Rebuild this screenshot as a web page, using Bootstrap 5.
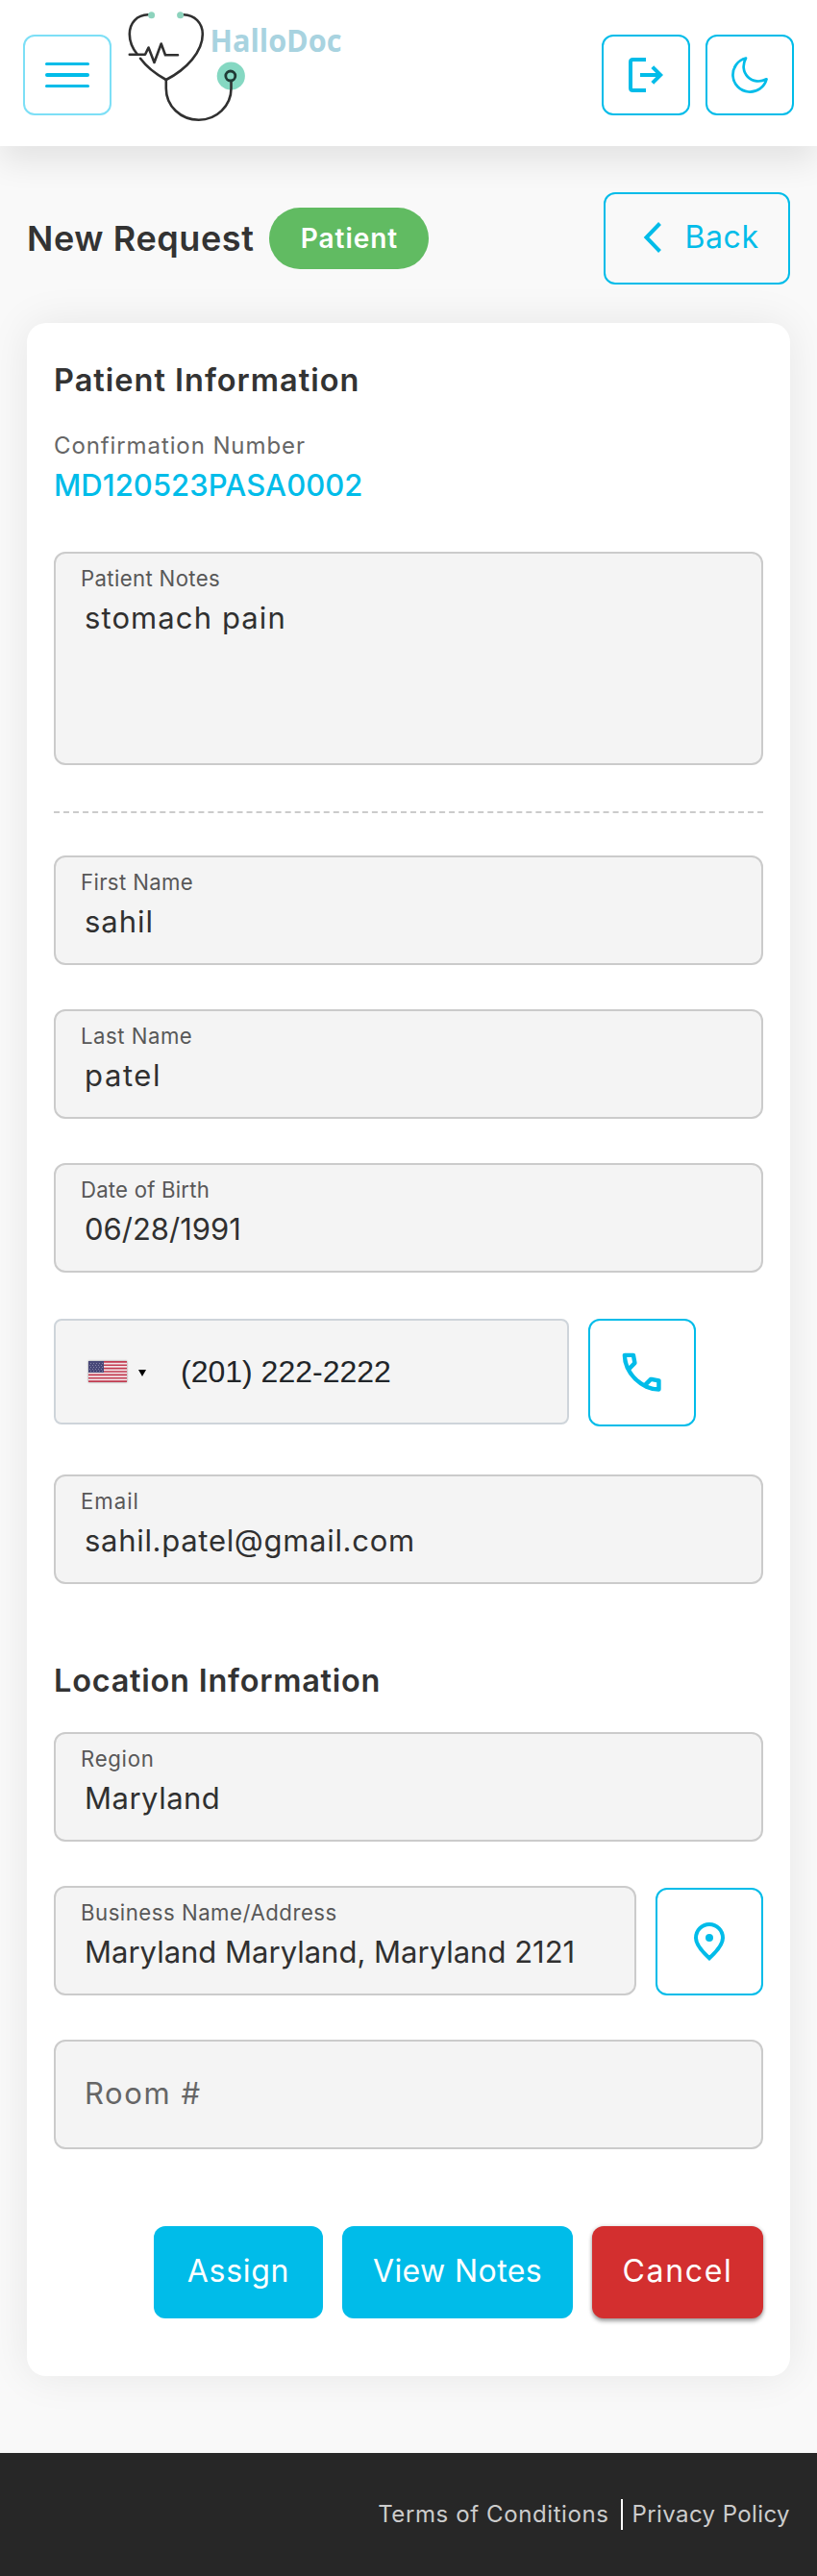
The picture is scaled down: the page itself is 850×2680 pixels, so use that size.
<!DOCTYPE html>
<html lang="en">
<head>
<meta charset="utf-8">
<meta name="viewport" content="width=device-width, initial-scale=1">
<title>HalloDoc - New Request</title>
<link href="https://cdn.jsdelivr.net/npm/bootstrap@5.3.0/dist/css/bootstrap.min.css" rel="stylesheet">
<style>
  :root { --brand: #00bce9; --ink: #333; --line: #cbcbcb; }
  body { background: #f9f9f9; color: var(--ink); font-family: Inter, "Open Sans", sans-serif; }
  .topbar { height: 152px; padding: 4px 24px 0; box-shadow: 0 16px 32px rgba(0,0,0,.09); }
  .topbar .btn { width: 92px; height: 84px; }
  .brand-logo { margin: 0 0 26px 14px; }
  .btn { border-radius: 12px; border-width: 2px; font-size: 32px; padding: 0; display: inline-flex; align-items: center; justify-content: center; white-space: nowrap; }
  .btn-brand-outline { color: var(--brand); border-color: var(--brand); }
  .btn-menu { border-color: #7ddff6; color: var(--brand); }
  .menu-lines { width: 46px; gap: 8px; }
  .menu-lines span { height: 3.6px; border-radius: 2px; background: var(--brand); }
  .page-body { padding: 48px 28px 80px; }
  .title-row { height: 96px; margin-bottom: 40px; }
  .page-title { font-size: 36px; font-weight: 600; letter-spacing: .6px; line-height: 48px; width: 252px; white-space: nowrap; }
  .tag-patient { width: 166px; height: 64px; background: #61bb62; font-size: 28px; font-weight: 600; letter-spacing: .95px; padding-left: 1px; }
  .btn-back { width: 194px; height: 96px; letter-spacing: .6px; gap: 23px; padding: 0 0 2px 9px; }
  .panel { border: 0; border-radius: 20px; padding: 36px 28px 60px; box-shadow: 0 0 44px rgba(0,0,0,.08); }
  .section-title { font-size: 32.5px; font-weight: 600; line-height: 48px; letter-spacing: 1px; margin: 0; white-space: nowrap; }
  .conf-label { font-size: 24px; line-height: 36px; letter-spacing: .9px; color: #666; margin-top: 26px; }
  .conf-number { font-size: 31px; line-height: 46px; letter-spacing: .05px; font-weight: 500; color: var(--brand); margin-bottom: 46px; }
  .field { height: 114px; border: 2px solid var(--line); border-radius: 12px; background: #f4f4f4; padding: 12px 10px 0 26px; white-space: nowrap; overflow: hidden; }
  .field + .field { margin-top: 46px; }
  .field-notes { height: 222px; }
  .field-label { font-size: 22.2px; line-height: 28px; letter-spacing: .35px; color: #585858; }
  .field-value { font-size: 31px; line-height: 40px; letter-spacing: 1.1px; margin: 7px 0 0 4px; color: #303030; }
  .field-empty { padding: 0 10px 3px 26px; }
  .field-empty .field-value { color: #666; margin-top: 0; }
  .dashes { border-top: 2px dashed var(--line); margin: 48px 0 44px; }
  .phone-row { margin: 48px 0 50px; gap: 20px; height: 112px; }
  .phone-box { width: 536px; height: 110px; border: 2px solid #ced4da; border-radius: 8px; background: #f4f4f4; padding-left: 34px; }
  .phone-box .number { font-family: "Liberation Sans", Arial, sans-serif; font-size: 32px; line-height: 40px; color: #212529; margin-left: 36px; }
  .flag { box-shadow: 0 0 2px #888; }
  .caret { margin: 2px 0 0 12px; border: 4px solid transparent; border-top: 7px solid #000; border-bottom: 0; }
  .btn-square { width: 112px; height: 112px; }
  .location-title { margin: 77px 0 29px; letter-spacing: .75px; }
  .address-row { margin: 46px 0; gap: 20px; }
  .actions { gap: 20px; margin-top: 80px; }
  .actions .btn { height: 96px; border: 0; color: #fff; background: var(--brand); padding-bottom: 3px; }
  .actions .btn-cancel { background: #d32f2f; box-shadow: 0 3px 4px rgba(0,0,0,.35), 0 0 4px rgba(0,0,0,.15); }
  .w-assign { width: 176px; letter-spacing: .7px; }
  .w-view { width: 240px; letter-spacing: .4px; }
  .w-cancel { width: 178px; letter-spacing: 1.7px; }
  .footer-bar { height: 128px; background: #272727; padding-right: 28px; font-size: 24px; color: #ccc; }
  .footer-bar a { color: #ccc; text-decoration: none; white-space: nowrap; }
  .foot-terms { letter-spacing: .6px; }
  .foot-privacy { letter-spacing: .4px; }
  .foot-divider { width: 2px; height: 32px; background: #fff; margin: 0 10px 0 12px; }
  .ls-00 { letter-spacing: 0; } .ls-02 { letter-spacing: .2px; } .ls-05 { letter-spacing: .5px; }
  .ls-07 { letter-spacing: .7px; } .ls-10 { letter-spacing: 1px; } .ls-16 { letter-spacing: 1.6px; }
</style>
</head>
<body>

<header class="topbar bg-white d-flex align-items-center justify-content-between">
  <div class="d-flex align-items-center">
    <button class="btn btn-menu" type="button" aria-label="Menu">
      <span class="menu-lines d-flex flex-column"><span></span><span></span><span></span></span>
    </button>
    <svg class="brand-logo" width="240" height="130" viewBox="130 0 240 130" fill="none" stroke="#303030" stroke-width="2.6" stroke-linecap="round" stroke-linejoin="round">
      <circle cx="240.3" cy="79" r="14.6" fill="#85d8c2" stroke="none"/>
      <path d="M154 15.3C142.500 15.500 134.800 24 134.800 35.500C134.800 43 138 50.500 142.500 56"/>
      <path d="M191 15.3C202.500 15.500 210.800 24 210.800 35.500C210.800 54 194 72 172.800 83C161 76.500 152 69 146 60.800"/>
      <path d="M134.800 56.700H151L154.500 49.500L160.500 65L167.700 45.500L172 57.200H185"/>
      <path d="M172.800 83V92C172.800 110.500 188 124.700 206.800 124.700C225.500 124.700 240.500 110 240.500 92V84.500"/>
      <circle cx="239.8" cy="79" r="5" stroke="#1f3a35" stroke-width="2.8"/>
      <g fill="#8dd3bd" stroke="none"><circle cx="157.600" cy="15.700" r="3.500"/><circle cx="187.600" cy="15.700" r="3.500"/></g>
      <text x="218.500" y="53.700" textLength="137" lengthAdjust="spacingAndGlyphs" font-family="Open Sans, sans-serif" font-size="32" font-weight="700" fill="#a8d3e0" stroke="none">HalloDoc</text>
    </svg>
  </div>
  <div class="d-flex gap-3">
    <button class="btn btn-brand-outline" type="button" aria-label="Log out">
      <svg width="36" height="36" viewBox="0 0 36 36" fill="none" stroke="currentColor" stroke-width="4"><path d="M18 2H4.500Q2 2 2 4.500V31.500Q2 34 4.500 34H18M12 18H33M24.800 9.600L33.200 18L24.800 26.400"/></svg>
    </button>
    <button class="btn btn-brand-outline" type="button" aria-label="Dark mode">
      <svg width="38" height="38" viewBox="0 0 38 38" fill="none" stroke="currentColor" stroke-width="2.700" stroke-linejoin="round"><path d="M15 1.500A17.800 17.800 0 1 0 36.500 23.300C30 26.800 22 26.200 17 21C11.800 15.800 11.400 8 15 1.500Z"/></svg>
    </button>
  </div>
</header>

<main class="page-body">
  <div class="title-row d-flex align-items-center">
    <h1 class="page-title mb-0">New Request</h1>
    <span class="tag-patient rounded-pill text-white d-flex align-items-center justify-content-center">Patient</span>
    <button class="btn btn-brand-outline btn-back ms-auto" type="button">
      <svg width="20" height="32" viewBox="0 0 20 32" fill="none" stroke="currentColor" stroke-width="4"><path d="M17.500 1.500L3.500 16L17.500 30.500"/></svg>
      <span>Back</span>
    </button>
  </div>

  <div class="panel card">
    <h2 class="section-title">Patient Information</h2>
    <div class="conf-label">Confirmation Number</div>
    <div class="conf-number">MD120523PASA0002</div>

    <div class="field field-notes">
      <div class="field-label">Patient Notes</div>
      <div class="field-value">stomach pain</div>
    </div>

    <div class="dashes"></div>

    <div class="field">
      <div class="field-label">First Name</div>
      <div class="field-value ls-10">sahil</div>
    </div>
    <div class="field">
      <div class="field-label ls-05">Last Name</div>
      <div class="field-value ls-16">patel</div>
    </div>
    <div class="field">
      <div class="field-label ls-02">Date of Birth</div>
      <div class="field-value ls-00">06/28/1991</div>
    </div>

    <div class="phone-row d-flex align-items-start">
      <div class="phone-box d-flex align-items-center">
        <svg class="flag" width="40" height="22" viewBox="0 0 40 22" shape-rendering="crispEdges">
          <rect width="40" height="22" fill="#f3e6e8"/>
          <path d="M0 .85H40M0 4.230H40M0 7.620H40M0 11H40M0 14.380H40M0 17.770H40M0 21.150H40" stroke="#c23b50" stroke-width="1.700" shape-rendering="auto"/>
          <rect width="16" height="12" fill="#484878"/>
          <path d="M2 2H15M1 4H14M2 6H15M1 8H14M2 10H15" stroke="#8583a8" stroke-width="1" stroke-dasharray="1 2"/>
        </svg>
        <span class="caret"></span>
        <span class="number">(201) 222-2222</span>
      </div>
      <button class="btn btn-brand-outline btn-square" type="button" aria-label="Call">
        <svg width="53.333" height="53.333" viewBox="0 -960 960 960" fill="currentColor"><path d="M798-120q-125 0-247-54.500T329-329Q229-429 174.500-551T120-798q0-18 12-30t30-12h162q14 0 25 9.500t13 22.500l26 140q2 16-1 27t-11 19l-97 98q20 37 47.500 71.500T387-386q31 31 65 57.500t72 48.500l94-94q9-9 23.500-13.500T670-390l138 28q14 4 23 14.500t9 23.500v162q0 18-12 30t-30 12ZM241-600l66-66-17-94h-89q5 41 14 81t26 79Zm358 358q39 17 79.500 27t81.500 13v-88l-94-19-67 67Z"/></svg>
      </button>
    </div>

    <div class="field">
      <div class="field-label ls-10">Email</div>
      <div class="field-value ls-07">sahil.patel@gmail.com</div>
    </div>

    <h2 class="section-title location-title">Location Information</h2>

    <div class="field">
      <div class="field-label ls-07">Region</div>
      <div class="field-value ls-05">Maryland</div>
    </div>

    <div class="address-row d-flex align-items-end">
      <div class="field flex-grow-1">
        <div class="field-label ls-05">Business Name/Address</div>
        <div class="field-value ls-00">Maryland Maryland, Maryland 2121</div>
      </div>
      <button class="btn btn-brand-outline btn-square" type="button" aria-label="Show on map">
        <svg width="32" height="40" viewBox="0 0 32 40" fill="none" stroke="currentColor" stroke-width="4"><path d="M16 2C8.200 2 2 8.200 2 16.200C2 22.500 7 29 16 37.200C25 29 30 22.500 30 16.200C30 8.200 23.800 2 16 2Z"/><circle cx="16" cy="16" r="4" fill="currentColor" stroke="none"/></svg>
      </button>
    </div>

    <div class="field field-empty d-flex align-items-center">
      <div class="field-value ls-16">Room #</div>
    </div>

    <div class="actions d-flex justify-content-end">
      <button class="btn w-assign" type="button">Assign</button>
      <button class="btn w-view" type="button">View Notes</button>
      <button class="btn btn-cancel w-cancel" type="button">Cancel</button>
    </div>
  </div>
</main>

<footer class="footer-bar d-flex align-items-center justify-content-end">
  <a class="foot-terms" href="#">Terms of Conditions</a>
  <span class="foot-divider"></span>
  <a class="foot-privacy" href="#">Privacy Policy</a>
</footer>

<script src="https://cdn.jsdelivr.net/npm/bootstrap@5.3.0/dist/js/bootstrap.bundle.min.js"></script>
</body>
</html>
